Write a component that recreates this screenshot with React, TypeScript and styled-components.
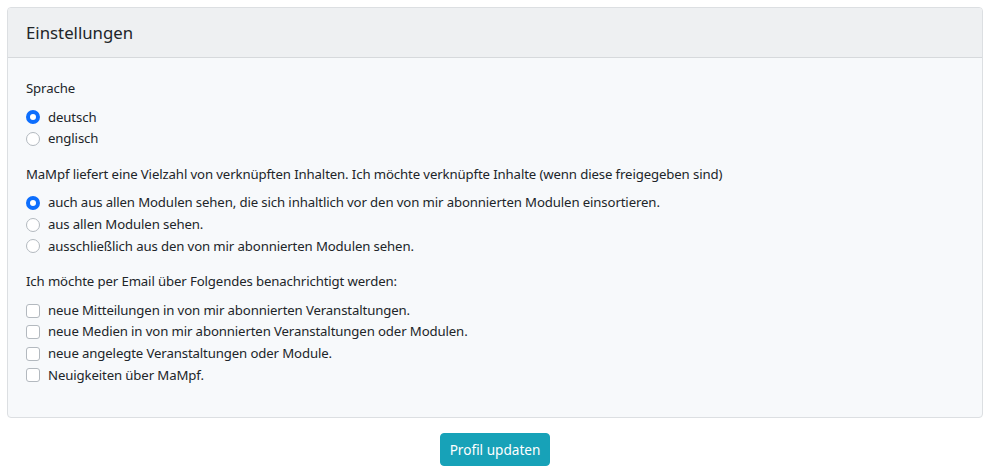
import { createGlobalStyle } from "styled-components";
import styled from "styled-components";

const Global = createGlobalStyle`
  html, body {
    margin: 0;
    padding: 0;
    background: #fff;
    font-family: "Noto Sans", "Open Sans", sans-serif;
    font-size: 13.2px;
    letter-spacing: -0.12px;
    color: #212529;
  }
`;

const Page = styled.div`
  padding: 7px 9px 0 7px;
`;

const Card = styled.section`
  border: 1px solid #dcdfe2;
  border-radius: 4px;
  background: #f7f9fb;
  overflow: hidden;
`;

const Header = styled.div`
  background: #eef0f2;
  border-bottom: 1px solid #d6d9dc;
  padding: 0 18px;
  height: 50px;
  display: flex;
  align-items: center;
  font-size: 16.8px;
  letter-spacing: 0;
  padding-bottom: 1px;
  box-sizing: border-box;
`;

const Body = styled.div`
  padding: 20px 18px 17px;
`;

const Group = styled.div`
  margin-bottom: 14px;
`;

const Label = styled.div`
  line-height: 21.6px;
  margin-bottom: 7px;
`;

const Option = styled.label`
  display: flex;
  align-items: center;
  gap: 8px;
  line-height: 21.6px;
`;

const Radio = styled.span<{ $on?: boolean }>`
  width: 14px;
  height: 14px;
  box-sizing: border-box;
  border-radius: 50%;
  flex: none;
  background: #fff;
  border: ${({ $on }) => ($on ? "4px solid #0d6efd" : "1px solid #b3b9bf")};
`;

const Box = styled.span`
  width: 14px;
  height: 14px;
  box-sizing: border-box;
  border-radius: 3px;
  flex: none;
  background: #fff;
  border: 1px solid #b3b9bf;
`;

const Footer = styled.div`
  display: flex;
  justify-content: center;
  padding-top: 15px;
`;

const Button = styled.button`
  font: inherit;
  font-size: 13.6px;
  background: #17a2b8;
  color: #fff;
  border: 1px solid #17a2b8;
  border-radius: 4px;
  height: 33px;
  width: 110px;
  padding: 0;
  line-height: 1;
`;

export default function App() {
  return (
    <Page>
      <Global />
      <Card>
        <Header>Einstellungen</Header>
        <Body>
          <Group>
            <Label>Sprache</Label>
            <Option><Radio $on />deutsch</Option>
            <Option><Radio />englisch</Option>
          </Group>
          <Group>
            <Label>
              MaMpf liefert eine Vielzahl von verknüpften Inhalten. Ich möchte verknüpfte Inhalte (wenn diese freigegeben sind)
            </Label>
            <Option><Radio $on />auch aus allen Modulen sehen, die sich inhaltlich vor den von mir abonnierten Modulen einsortieren.</Option>
            <Option><Radio />aus allen Modulen sehen.</Option>
            <Option><Radio />ausschließlich aus den von mir abonnierten Modulen sehen.</Option>
          </Group>
          <Group>
            <Label>Ich möchte per Email über Folgendes benachrichtigt werden:</Label>
            <Option><Box />neue Mitteilungen in von mir abonnierten Veranstaltungen.</Option>
            <Option><Box />neue Medien in von mir abonnierten Veranstaltungen oder Modulen.</Option>
            <Option><Box />neue angelegte Veranstaltungen oder Module.</Option>
            <Option><Box />Neuigkeiten über MaMpf.</Option>
          </Group>
        </Body>
      </Card>
      <Footer>
        <Button>Profil updaten</Button>
      </Footer>
    </Page>
  );
}
